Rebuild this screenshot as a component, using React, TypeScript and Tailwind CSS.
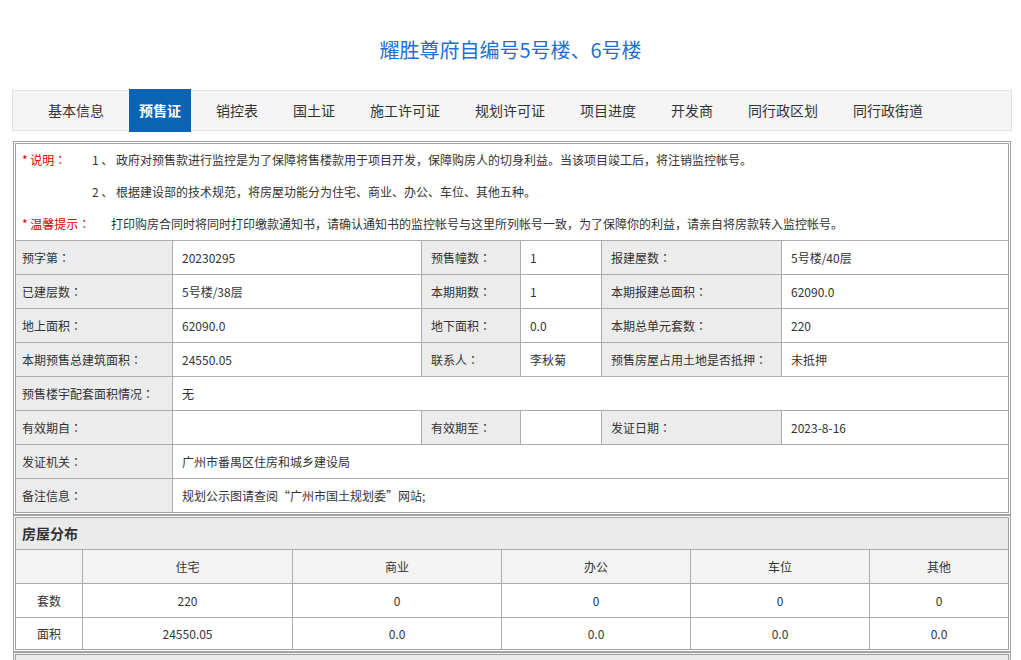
import React from "react";

const FONT = { fontFamily: "'Noto Sans CJK SC', 'Noto Sans', 'Liberation Sans', sans-serif" };

const tabs = ["基本信息", "预售证", "销控表", "国土证", "施工许可证", "规划许可证", "项目进度", "开发商", "同行政区划", "同行政街道"];

function Colon() {
  return <span style={{ fontFamily: "'Noto Sans CJK JP', sans-serif" }}>：</span>;
}

function withColon(s: string) {
  if (s.endsWith("：")) {
    return (
      <>
        {s.slice(0, -1)}
        <Colon />
      </>
    );
  }
  return s;
}

function L({ w, children, first }: { w: string; children: string; first?: boolean }) {
  return (
    <div className={`${w} shrink-0 h-full flex items-center bg-[#ececec] border-r border-[#acacac] ${first ? "pl-[6px]" : "pl-[9px]"}`}>
      {withColon(children)}
    </div>
  );
}
function V({ w, children, last }: { w: string; children?: React.ReactNode; last?: boolean }) {
  return (
    <div className={`${w} h-full flex items-center bg-white pl-[9px] ${last ? "" : "border-r border-[#acacac]"}`}>
      {children}
    </div>
  );
}

function Row({ children, last }: { children: React.ReactNode; last?: boolean }) {
  return <div className={`flex ${last ? "h-[33px]" : "h-[34px] border-b border-[#acacac]"}`}>{children}</div>;
}

const subCols = ["w-[67px]", "w-[210px]", "w-[209px]", "w-[189px]", "w-[179px]", "flex-1"];

function SubRow({ cells, header, h, border }: { cells: string[]; header?: boolean; h: string; border?: boolean }) {
  return (
    <div className={`flex ${h} ${border ? "border-b border-[#acacac]" : ""} ${header ? "bg-[#f3f3f3]" : "bg-white"}`}>
      {cells.map((c, i) => (
        <div
          key={i}
          className={`${subCols[i]} shrink-0 h-full flex items-center justify-center ${i < 5 ? "border-r border-[#acacac]" : ""}`}
        >
          {c}
        </div>
      ))}
    </div>
  );
}

export default function App() {
  return (
    <div className="w-[1021px] h-[660px] overflow-hidden bg-white text-[#333]" style={FONT}>
      <div className="h-[90px] pt-[10px] flex items-center justify-center">
        <h1 className="text-[20px] leading-[28px] text-[#1f6fcf] font-normal">耀胜尊府自编号5号楼、6号楼</h1>
      </div>

      <div className="ml-[12px] w-[1000px] h-[41px] border border-[#e2e2e2] bg-[#f5f5f5] flex items-stretch pl-[25px] gap-[15px]">
        {tabs.map((t) =>
          t === "预售证" ? (
            <div key={t} className="-my-[2px] px-[10px] flex items-center bg-[#0a63b3] text-white font-bold text-[14px]">
              {t}
            </div>
          ) : (
            <div key={t} className="px-[10px] flex items-center text-[14px] text-[#333]">
              {t}
            </div>
          )
        )}
      </div>

      <div className="mt-[10px] ml-[13px] w-[998px] border-[3px] border-double border-[#a3a3a3] text-[12px]">
        <div className="h-[96px] leading-[32px]">
          <div className="flex h-[32px] pl-[6px]">
            <span className="w-[70px] text-[#d40000]">* 说明<Colon /></span>
            <span>1&nbsp;、&nbsp;政府对预售款进行监控是为了保障将售楼款用于项目开发，保障购房人的切身利益。当该项目竣工后，将注销监控帐号。</span>
          </div>
          <div className="flex h-[32px] pl-[6px]">
            <span className="w-[70px]"></span>
            <span>2&nbsp;、&nbsp;根据建设部的技术规范，将房屋功能分为住宅、商业、办公、车位、其他五种。</span>
          </div>
          <div className="flex h-[32px] pl-[6px]">
            <span className="w-[89px] text-[#d40000]">* 温馨提示<Colon /></span>
            <span>打印购房合同时将同时打印缴款通知书，请确认通知书的监控帐号与这里所列帐号一致，为了保障你的利益，请亲自将房款转入监控帐号。</span>
          </div>
        </div>

        <div className="border-t border-[#acacac]">
          <Row>
            <L w="w-[157px]" first>预字第：</L>
            <V w="w-[249px]">20230295</V>
            <L w="w-[99px]">预售幢数：</L>
            <V w="w-[81px]">1</V>
            <L w="w-[180px]">报建屋数：</L>
            <V w="flex-1" last>5号楼/40层</V>
          </Row>
          <Row>
            <L w="w-[157px]" first>已建层数：</L>
            <V w="w-[249px]">5号楼/38层</V>
            <L w="w-[99px]">本期期数：</L>
            <V w="w-[81px]">1</V>
            <L w="w-[180px]">本期报建总面积：</L>
            <V w="flex-1" last>62090.0</V>
          </Row>
          <Row>
            <L w="w-[157px]" first>地上面积：</L>
            <V w="w-[249px]">62090.0</V>
            <L w="w-[99px]">地下面积：</L>
            <V w="w-[81px]">0.0</V>
            <L w="w-[180px]">本期总单元套数：</L>
            <V w="flex-1" last>220</V>
          </Row>
          <Row>
            <L w="w-[157px]" first>本期预售总建筑面积：</L>
            <V w="w-[249px]">24550.05</V>
            <L w="w-[99px]">联系人：</L>
            <V w="w-[81px]">李秋菊</V>
            <L w="w-[180px]">预售房屋占用土地是否抵押：</L>
            <V w="flex-1" last>未抵押</V>
          </Row>
          <Row>
            <L w="w-[157px]" first>预售楼宇配套面积情况：</L>
            <V w="flex-1" last>无</V>
          </Row>
          <Row>
            <L w="w-[157px]" first>有效期自：</L>
            <V w="w-[249px]"></V>
            <L w="w-[99px]">有效期至：</L>
            <V w="w-[81px]"></V>
            <L w="w-[180px]">发证日期：</L>
            <V w="flex-1" last>2023-8-16</V>
          </Row>
          <Row>
            <L w="w-[157px]" first>发证机关：</L>
            <V w="flex-1" last>广州市番禺区住房和城乡建设局</V>
          </Row>
          <Row last>
            <L w="w-[157px]" first>备注信息：</L>
            <V w="flex-1" last>规划公示图请查阅“广州市国土规划委”网站;</V>
          </Row>
        </div>
      </div>

      <div className="ml-[13px] w-[998px] border-[3px] border-double border-[#a3a3a3] text-[12px]">
        <div className="h-[32px] border-b border-[#acacac] bg-[#ebebeb] flex items-center pl-[6px] text-[14px] font-bold text-[#333]">
          房屋分布
        </div>
        <SubRow header h="h-[34px]" border cells={["", "住宅", "商业", "办公", "车位", "其他"]} />
        <SubRow h="h-[34px]" border cells={["套数", "220", "0", "0", "0", "0"]} />
        <SubRow h="h-[31px]" cells={["面积", "24550.05", "0.0", "0.0", "0.0", "0.0"]} />
      </div>

      <div className="ml-[13px] w-[998px] border-[3px] border-double border-[#a3a3a3] h-[40px] bg-[#ebebeb]"></div>
    </div>
  );
}
